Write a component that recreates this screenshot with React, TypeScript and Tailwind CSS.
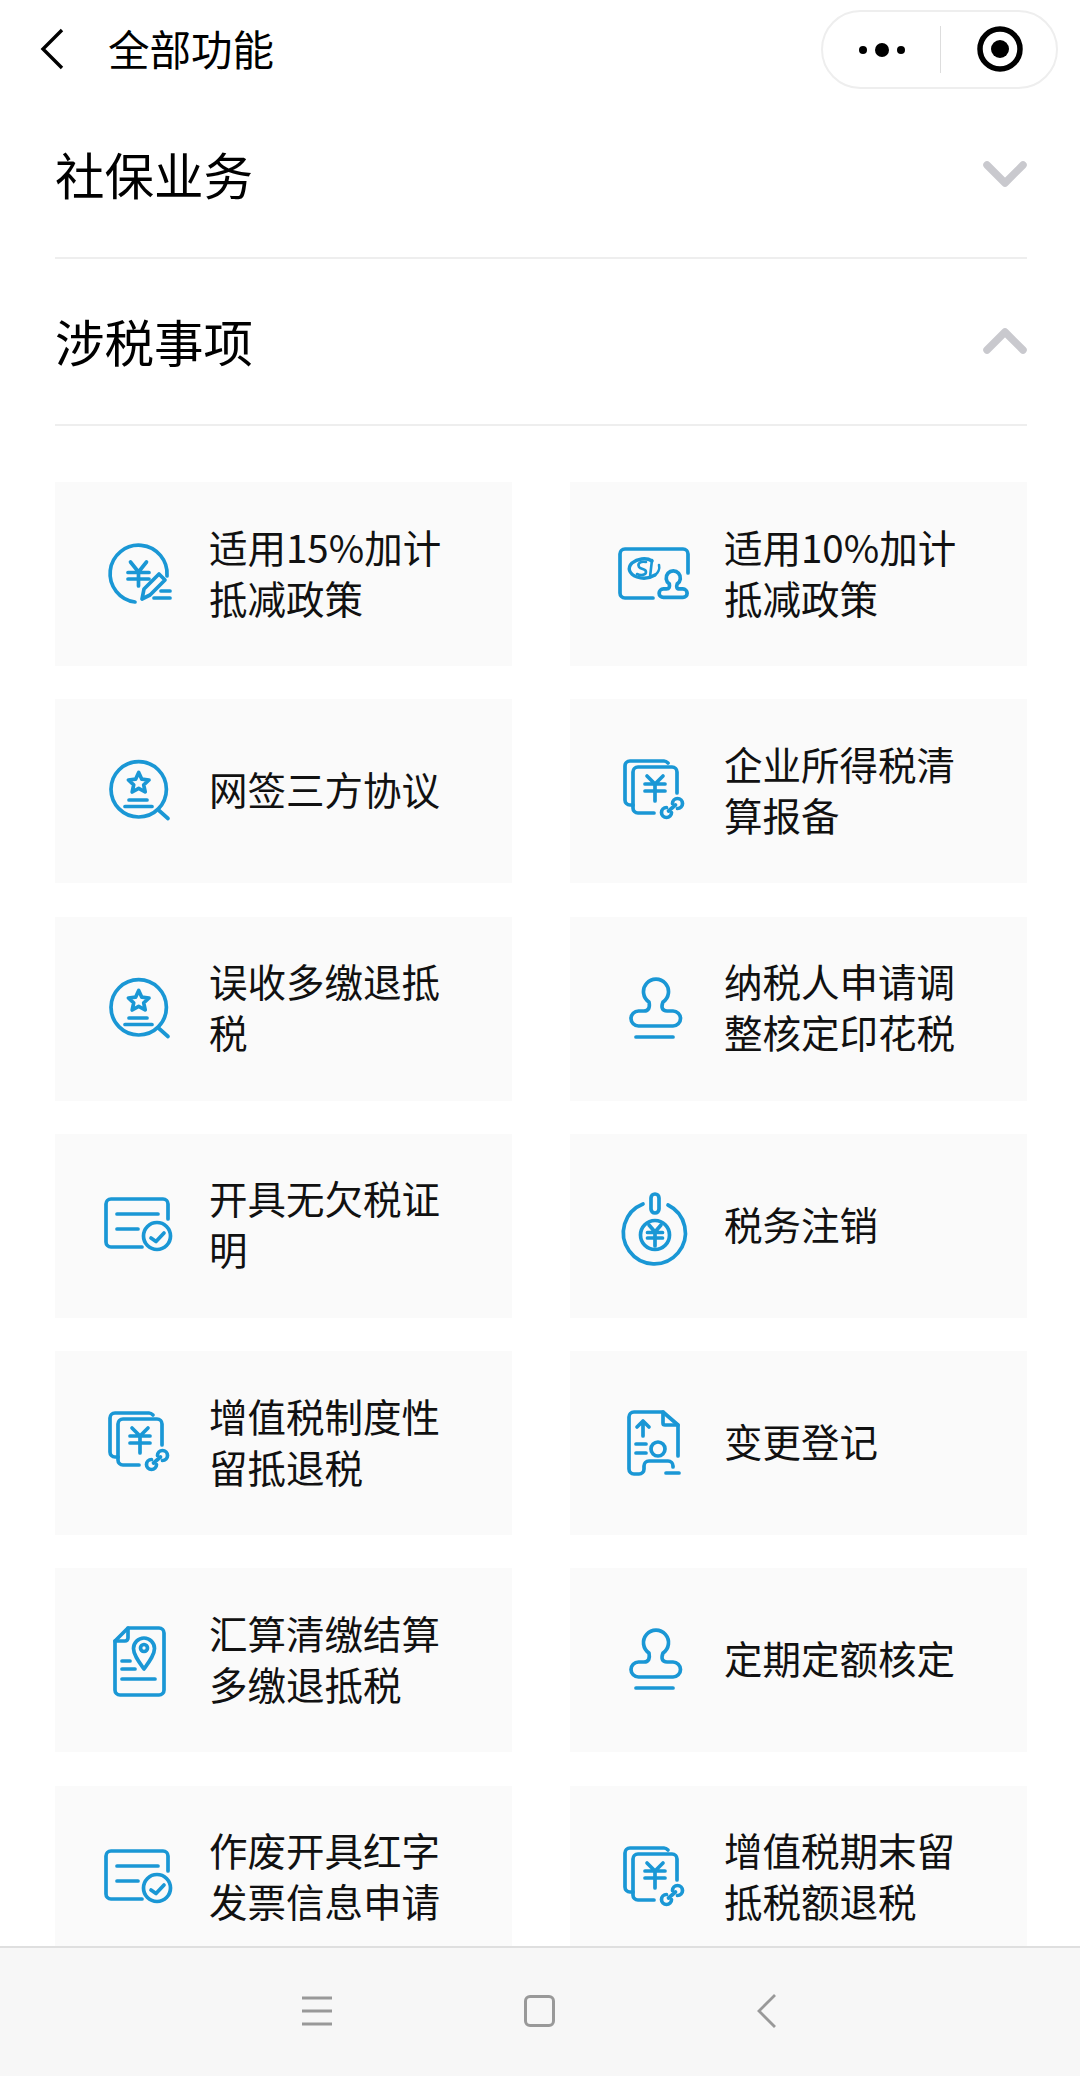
import React from "react";

const C = "#1a97d5";
const W = 3.7;

function Svg({ children }: { children: React.ReactNode }) {
  return (
    <svg width="90" height="90" viewBox="0 0 90 90" fill="none" stroke={C} strokeWidth={W} strokeLinecap="round" strokeLinejoin="round" className="shrink-0">
      {children}
    </svg>
  );
}

const YenPen = () => (
  <Svg>
    <path d="M74 47A28.5 28.5 0 1 0 42 73" />
    <path d="M37.5 33L45.5 43L53.5 33M35 43.5H56M35 50H56M45.5 43V57" />
    <path d="M66 45L72 51L57 66L49 70L51 60Z" />
    <path d="M68 62H77M61 69H77" />
  </Svg>
);

const Stamp = ({ x = 0, y = 0, s = 1 }: { x?: number; y?: number; s?: number }) => (
  <g transform={`translate(${x} ${y}) scale(${s})`} strokeWidth={W / s}>
    <path d="M38 36C39 41 38 45 33 45H27.5a7.5 7.5 0 0 0 0 15H62a7.5 7.5 0 0 0 0-15H56C51 45 50 41 52 36A12.5 12.5 0 1 0 38 36Z" />
  </g>
);

const SICard = () => (
  <Svg>
    <path d="M80 44V25a5 5 0 0 0-5-5H17a5 5 0 0 0-5 5V64a5 5 0 0 0 5 5H45" />
    <path d="M44 32C38 28 29 30 24 34C19 39 21 45 29 48C35 50 42 49 47 46" strokeWidth="3.4" />
    <path d="M38 33C33 32 29 34 31 38C33 41 38 39 38 43C38 46 33 47 29 45" strokeWidth="2.6" />
    <path d="M44 31L42 48M51 36C52 40 50 44 47 46" strokeWidth="2.6" />
    <Stamp x={39.8} y={34.5} s={0.566} />
  </Svg>
);

const SearchStar = () => (
  <Svg>
    <circle cx="45.7" cy="43.3" r="27.7" />
    <path d="M66 64.5L75 72.5" />
    <path d="M45.7 26.5L48.8 33.2L56 34L50.7 38.8L52.2 46L45.7 42.4L39.2 46L40.7 38.8L35.4 34L42.6 33.2Z" />
    <path d="M36 54H54M32 60.5H59" />
  </Svg>
);

const YenDocs = () => (
  <Svg>
    <path d="M60 17C59 16 58 15 56 15H22a5 5 0 0 0-5 5V54a5 5 0 0 0 5 5H25" />
    <path d="M69 47V26a5 5 0 0 0-5-5H30a5 5 0 0 0-5 5V62a5 5 0 0 0 5 5H46" />
    <path d="M39 30L47 38L55 30M37 38H57M37 45H57M47 38V55" />
    <path d="M58.5 61.5A5 5 0 1 0 63.5 66.5" />
    <path d="M64.5 57.5A5 5 0 1 1 69.5 62.5" />
    <path d="M60.5 65L67.5 59" />
  </Svg>
);

const StampIcon = () => (
  <Svg>
    <Stamp x={3} y={2} />
    <path d="M28 73H65" />
  </Svg>
);

const CardCheck = () => (
  <Svg>
    <path d="M75 38V23a5 5 0 0 0-5-5H18a5 5 0 0 0-5 5V61a5 5 0 0 0 5 5H49" />
    <path d="M24 33H65M24 48H45" />
    <circle cx="64" cy="55" r="13.5" />
    <path d="M58 57L63 60.5L71 52" />
  </Svg>
);

const PowerYen = () => (
  <Svg>
    <path d="M35 23A31 31 0 1 0 60 24" />
    <rect x="43" y="13" width="8" height="19" rx="4" />
    <circle cx="47" cy="54" r="14.5" />
    <path d="M41 44L47 51L53 44M39.5 51.5H54.5M39.5 57H54.5M47 51V65" />
  </Svg>
);

const DocUser = () => (
  <Svg>
    <path d="M70 58V27L55 14H26a5 5 0 0 0-5 5V71a5 5 0 0 0 5 5H31a5 5 0 0 0 5-5V68a5 5 0 0 1 5-5H60a5 5 0 0 1 5 5V69" />
    <path d="M55 14V25a2 2 0 0 0 2 2H70" />
    <path d="M35 23V38M29 29L35 23L41 29" />
    <circle cx="50" cy="51" r="7" />
    <path d="M28 46H38M28 55H38M58 75H71" />
  </Svg>
);

const DocPin = () => (
  <Svg>
    <path d="M35 13H66a5 5 0 0 1 5 5V75a5 5 0 0 1-5 5H27a5 5 0 0 1-5-5V26Z" />
    <path d="M35 13V23a3 3 0 0 1-3 3H22" />
    <path d="M51 54C46 47 40.5 40 40.5 33.5a10.5 10.5 0 0 1 21 0C61.5 40 56 47 51 54Z" />
    <circle cx="51" cy="33" r="3.5" />
    <path d="M29 46H37M29 54H42M29 64H62" />
  </Svg>
);

const items: { icon: React.ReactNode; text: string }[] = [
  { icon: <YenPen />, text: "适用15%加计抵减政策" },
  { icon: <SICard />, text: "适用10%加计抵减政策" },
  { icon: <SearchStar />, text: "网签三方协议" },
  { icon: <YenDocs />, text: "企业所得税清算报备" },
  { icon: <SearchStar />, text: "误收多缴退抵税" },
  { icon: <StampIcon />, text: "纳税人申请调整核定印花税" },
  { icon: <CardCheck />, text: "开具无欠税证明" },
  { icon: <PowerYen />, text: "税务注销" },
  { icon: <YenDocs />, text: "增值税制度性留抵退税" },
  { icon: <DocUser />, text: "变更登记" },
  { icon: <DocPin />, text: "汇算清缴结算多缴退抵税" },
  { icon: <StampIcon />, text: "定期定额核定" },
  { icon: <CardCheck />, text: "作废开具红字发票信息申请" },
  { icon: <YenDocs />, text: "增值税期末留抵税额退税" },
];

function Section({ title, up }: { title: string; up?: boolean }) {
  return (
    <div className="flex h-[167px] items-center justify-between border-b-2 border-[#eeeeee] pb-[2px]">
      <span className="text-[49.5px] leading-none text-black">{title}</span>
      <svg width="44" height="28" viewBox="0 0 44 28" fill="none" stroke="#c9c9ce" strokeWidth="7.5" strokeLinecap="round" strokeLinejoin="round">
        <path d={up ? "M4 23L22 5L40 23" : "M4 5L22 23L40 5"} />
      </svg>
    </div>
  );
}

export default function App() {
  return (
    <div className="flex h-[2076px] w-[1080px] flex-col overflow-hidden bg-white font-['Noto_Sans_CJK_SC',sans-serif] text-black">
      <header className="flex h-[92px] shrink-0 items-center justify-between pb-[2px] pr-[22px] pl-[40px] pt-[8px]">
        <div className="flex items-center">
          <svg width="24" height="42" viewBox="0 0 24 42" fill="none" stroke="#000" strokeWidth="3.4">
            <path d="M22 2L3 21L22 40" />
          </svg>
          <span className="ml-[44px] text-[41.5px] leading-none">全部功能</span>
        </div>
        <div className="flex h-[79px] w-[237px] items-center rounded-full border-2 border-[#eeeeee]">
          <div className="flex w-[117px] items-center justify-center gap-[8px] pt-[1px]">
            <span className="h-[8px] w-[8px] rounded-full bg-black" />
            <span className="h-[14px] w-[14px] rounded-full bg-black" />
            <span className="h-[8px] w-[8px] rounded-full bg-black" />
          </div>
          <div className="h-[47px] w-px bg-[#dddddd]" />
          <div className="flex flex-1 justify-center pl-[3px]">
            <svg width="46" height="46" viewBox="0 0 46 46">
              <circle cx="23" cy="23" r="20" fill="none" stroke="#000" strokeWidth="5.5" />
              <circle cx="23" cy="23" r="9" fill="#000" />
            </svg>
          </div>
        </div>
      </header>

      <main className="min-h-0 flex-1 overflow-hidden pl-[55px] pr-[53px]">
        <Section title="社保业务" />
        <Section title="涉税事项" up />
        <div className="mt-[56px] grid grid-cols-2 gap-x-[58px] gap-y-[33.3px]">
          {items.map((it) => (
            <div key={it.text} className="flex h-[184px] items-center bg-[#fafafa] pl-[38px]">
              {it.icon}
              <p className="ml-[26px] w-[240px] pb-[5px] text-[38.5px] leading-[51px] text-[#111111]">{it.text}</p>
            </div>
          ))}
        </div>
      </main>

      <nav className="flex h-[130px] shrink-0 items-center border-t-2 border-[#dfdfdf] bg-[#f7f7f7] pb-[3px]">
        <svg className="ml-[300px]" width="34" height="32" viewBox="0 0 34 32" fill="none" stroke="#999" strokeWidth="3">
          <path d="M2 3H32M2 16H32M2 29H32" />
        </svg>
        <div className="ml-[190px] h-[32px] w-[31px] rounded-[6px] border-[3px] border-[#999999]" />
        <svg className="ml-[201px]" width="22" height="36" viewBox="0 0 22 36" fill="none" stroke="#999" strokeWidth="2.8">
          <path d="M19 2L3 18L19 34" />
        </svg>
      </nav>
    </div>
  );
}
